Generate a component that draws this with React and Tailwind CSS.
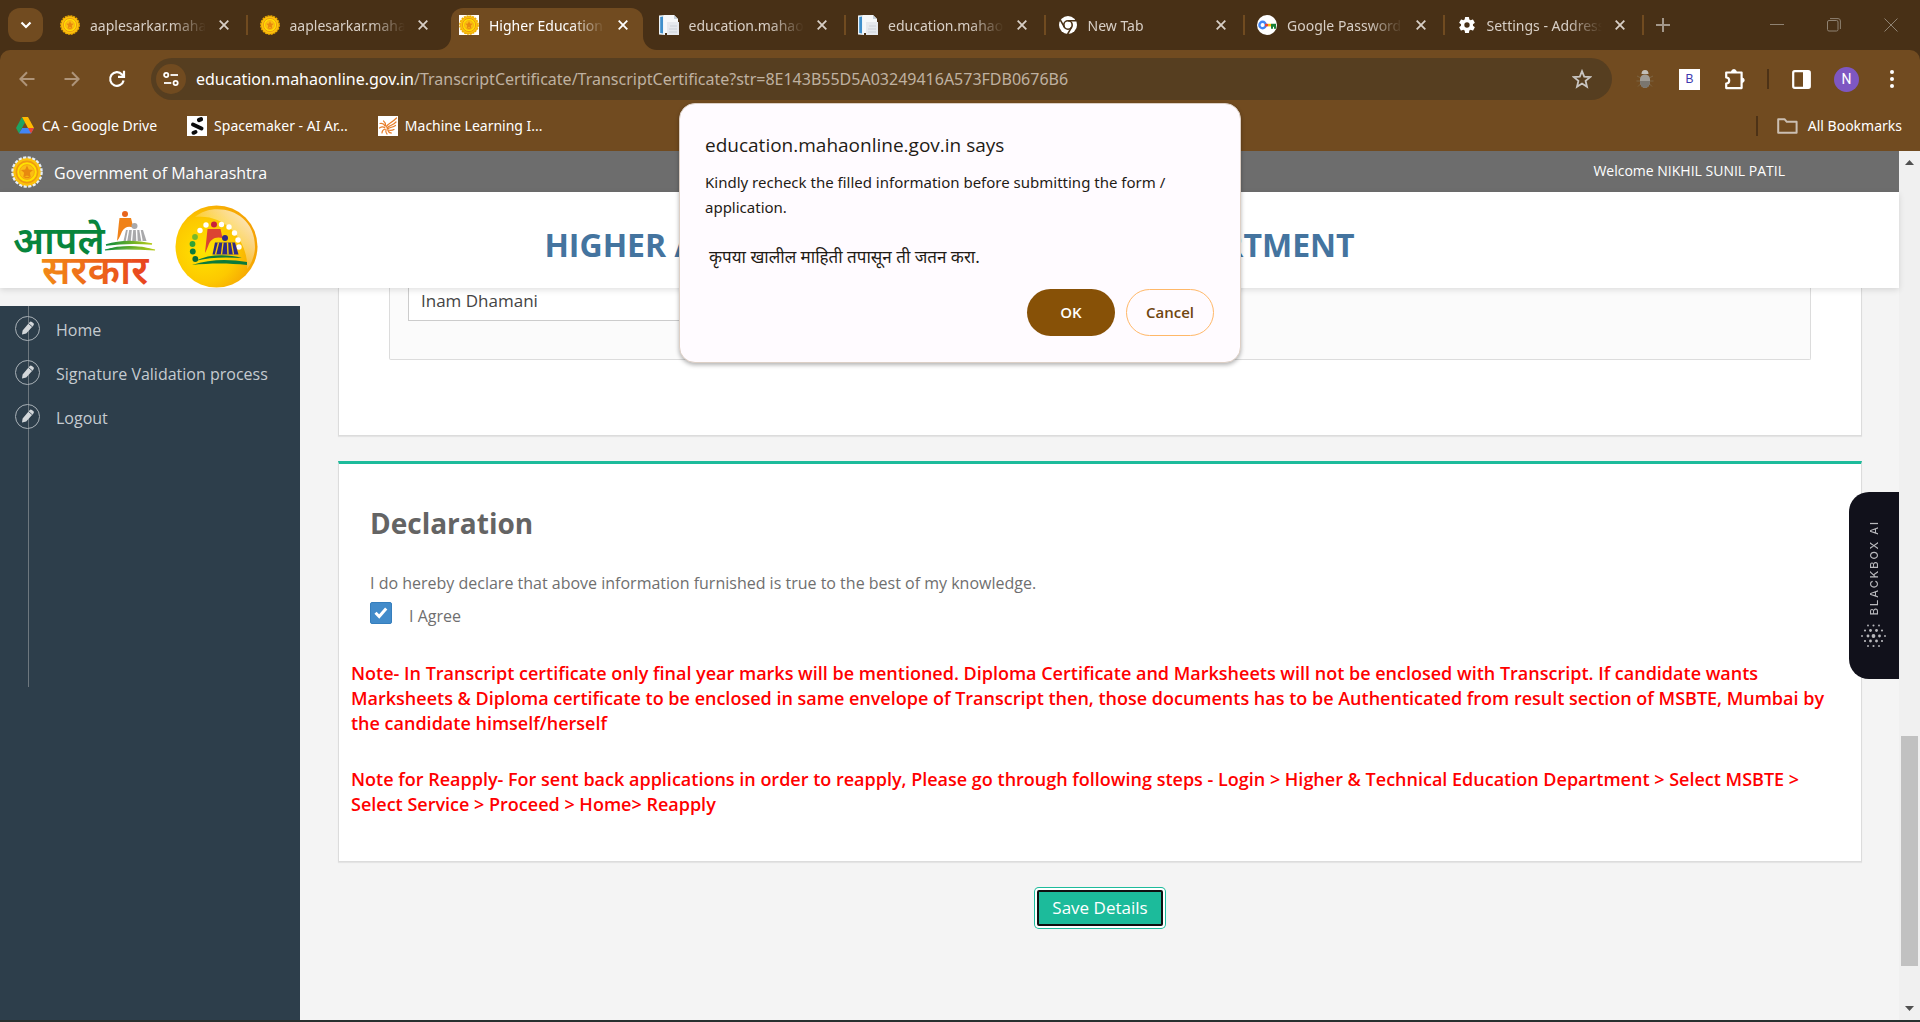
import React from "react";

const UI = "font-['Open_Sans','Noto_Sans',sans-serif]";

function Emblem({ size = 20, plain = false }) {
  return (
    <svg width={size} height={size} viewBox="0 0 32 32" aria-hidden="true" className="shrink-0">
      <circle cx="16" cy="16" r="14.6" fill="#f3b30c" stroke={plain ? "#e6eef5" : "#f0ab00"} strokeWidth="2.4" strokeDasharray="3.2 1.4" />
      <circle cx="16" cy="16" r="13.4" fill="#fbc20d" />
      <circle cx="16" cy="16" r="10.6" fill="#ffe100" stroke="#ee9a12" strokeWidth="1.6" />
      <circle cx="16" cy="16" r="7.4" fill="#fbbd14" stroke="#f0a010" strokeWidth="0.8" />
      <path d="M16 9.5l1.8 3.9 4.2.5-3.1 2.9.9 4.8-3.8-2.2-3.8 2.2.9-4.8-3.1-2.9 4.2-.5z" fill="#e8890f" />
      <path d="M13.4 21.5h5.2" stroke="#e8890f" strokeWidth="1.4" />
    </svg>
  );
}

function FileIcon() {
  return (
    <svg width="20" height="20" viewBox="0 0 20 20" aria-hidden="true">
      <path d="M0 .5L6 0v20l-6-.5z" fill="#eef4f9" />
      <path d="M1.200 2l2.800-.5v17l-2.800-.5z" fill="#3f8fcb" />
      <path d="M5 0h10l4 4v14H5z" fill="#f6f8fa" />
      <path d="M15 0v4h4z" fill="#c6cfd8" />
      <path d="M8 7h12v13H8z" fill="#e6e9ee" />
      <path d="M11 11h7M10 14h8M10 17h8" stroke="#cdd2d9" strokeWidth="1" />
    </svg>
  );
}

function ChromeIcon() {
  return (
    <svg width="20" height="20" viewBox="0 0 20 20" aria-hidden="true">
      <circle cx="10" cy="10" r="9" fill="#fff" />
      <circle cx="10" cy="10" r="4.2" fill="none" stroke="#483016" strokeWidth="1.6" />
      <path d="M10 5.8h8M6.4 12.1L2.4 5.2M13.6 12.1l-4 7" stroke="#483016" strokeWidth="1.6" />
    </svg>
  );
}

function KeyIcon() {
  return (
    <svg width="20" height="20" viewBox="0 0 20 20" aria-hidden="true">
      <circle cx="10" cy="10" r="10" fill="#fff" />
      <circle cx="5.6" cy="10" r="3.2" fill="none" stroke="#4285f4" strokeWidth="2.4" />
      <path d="M8 8.8h3v2.6H8z" fill="#ea4335" />
      <path d="M11 8.8h3v2.6h-3z" fill="#fbbc04" />
      <path d="M14 8.8h5v5h-2v-2h-1v2h-2z" fill="#188038" />
    </svg>
  );
}

function GearIcon() {
  return (
    <svg width="20" height="20" viewBox="0 0 24 24" fill="#fff" aria-hidden="true">
      <path d="M19.14 12.94c.04-.3.06-.61.06-.94s-.02-.64-.07-.94l2.03-1.58a.49.49 0 00.12-.61l-1.92-3.32a.49.49 0 00-.59-.22l-2.39.96a7 7 0 00-1.62-.94l-.36-2.54a.48.48 0 00-.48-.41h-3.84a.47.47 0 00-.47.41l-.36 2.54c-.59.24-1.13.57-1.62.94l-2.39-.96a.48.48 0 00-.59.22L2.74 8.87a.47.47 0 00.12.61l2.03 1.58c-.05.3-.09.63-.09.94s.02.64.07.94l-2.03 1.58a.49.49 0 00-.12.61l1.92 3.32c.12.22.37.29.59.22l2.39-.96c.5.38 1.03.7 1.62.94l.36 2.54c.05.24.24.41.48.41h3.84c.24 0 .44-.17.47-.41l.36-2.54a7 7 0 001.62-.94l2.39.96c.22.08.47 0 .59-.22l1.92-3.32a.47.47 0 00-.12-.61zM12 15.2a3.2 3.2 0 110-6.4 3.2 3.2 0 010 6.4z" />
    </svg>
  );
}

const TABS = [
  { title: "aaplesarkar.mahaonline", icon: <Emblem /> },
  { title: "aaplesarkar.mahaonline", icon: <Emblem />, noSep: true },
  { title: "Higher Education Dept", icon: <span className="block bg-white"><Emblem /></span>, active: true },
  { title: "education.mahaonline", icon: <FileIcon /> },
  { title: "education.mahaonline", icon: <FileIcon /> },
  { title: "New Tab", icon: <ChromeIcon /> },
  { title: "Google Password", icon: <KeyIcon /> },
  { title: "Settings - Addresses", icon: <GearIcon /> },
];

function Cross({ color }) {
  return (
    <svg width="10" height="10" viewBox="0 0 10 10" aria-hidden="true">
      <path d="M.7.7l8.6 8.6M9.3.7L.7 9.3" stroke={color} strokeWidth="1.8" />
    </svg>
  );
}

function Tab({ title, icon, active, noSep }) {
  return (
    <div className="relative flex min-w-0 flex-1 items-center pl-3 pr-[14px]">
      {active && (
        <div className="absolute inset-x-1 bottom-0 top-2 rounded-t-xl bg-[#714b20]">
          <svg width="14" height="14" viewBox="0 0 14 14" className="absolute -left-[14px] bottom-0" aria-hidden="true">
            <path d="M14 0v14H0A14 14 0 0014 0z" fill="#714b20" />
          </svg>
          <svg width="14" height="14" viewBox="0 0 14 14" className="absolute -right-[14px] bottom-0" aria-hidden="true">
            <path d="M0 0v14h14A14 14 0 010 0z" fill="#714b20" />
          </svg>
        </div>
      )}
      <button className="relative flex min-w-0 flex-1 items-center gap-[10px]" type="button">
        <span className="shrink-0">{icon}</span>
        <span
          className={
            "block min-w-0 flex-1 overflow-hidden whitespace-nowrap pt-[2px] text-left text-sm leading-6 [mask-image:linear-gradient(to_right,black_70%,transparent)] " +
            (active ? "text-white" : "text-[#d8cfc6]")
          }
        >
          {title}
        </span>
      </button>
      <button type="button" aria-label="Close tab" className="relative ml-2 flex h-5 w-5 shrink-0 items-center justify-center">
        <Cross color={active ? "#fff" : "#d8cfc6"} />
      </button>
      {!active && !noSep && <span className="absolute right-0 top-[15px] h-5 w-[2px] bg-[#714b20]" />}
    </div>
  );
}

function TabStrip() {
  return (
    <div className="flex h-[50px] bg-[#483016]">
      <button type="button" aria-label="Search tabs" className="ml-2 mr-[5px] mt-2 flex h-[34px] w-[35px] items-center justify-center rounded-xl bg-[#714b20]">
        <svg width="12" height="8" viewBox="0 0 12 8" aria-hidden="true">
          <path d="M1.5 1.5L6 6l4.500-4.500" fill="none" stroke="#fff" strokeWidth="2.2" />
        </svg>
      </button>
      <div className="flex min-w-0 flex-1">
        {TABS.map((t, i) => (
          <Tab key={i} {...t} />
        ))}
      </div>
      <div className="flex w-[276px] items-center justify-between pl-3 pr-[22px]">
        <button type="button" aria-label="New tab">
          <svg width="14" height="14" viewBox="0 0 14 14" aria-hidden="true">
            <path d="M7 0v14M0 7h14" stroke="#a3978a" strokeWidth="2" />
          </svg>
        </button>
        <div className="flex items-center gap-[43px]">
          <button type="button" aria-label="Minimize">
            <svg width="14" height="14" viewBox="0 0 14 14" aria-hidden="true"><path d="M0 6.500h14" stroke="#8f8272" /></svg>
          </button>
          <button type="button" aria-label="Restore">
            <svg width="14" height="14" viewBox="0 0 14 14" fill="none" stroke="#8f8272" aria-hidden="true">
              <rect x=".5" y="2.500" width="10.500" height="10.500" rx="1.500" />
              <path d="M3 .6h8a2.400 2.400 0 012.400 2.400v8" />
            </svg>
          </button>
          <button type="button" aria-label="Close window">
            <svg width="14" height="14" viewBox="0 0 14 14" aria-hidden="true"><path d="M.5.5l13 13M13.500.5l-13 13" stroke="#8f8272" /></svg>
          </button>
        </div>
      </div>
    </div>
  );
}

function IconButton({ label, children }) {
  return (
    <button type="button" aria-label={label} className="flex h-[42px] w-[45px] shrink-0 items-center justify-center">
      {children}
    </button>
  );
}

function Toolbar() {
  return (
    <div className="flex h-[58px] items-center pl-1 pr-[6px]">
      <IconButton label="Back">
        <svg width="16" height="16" viewBox="0 0 16 16" fill="none" stroke="#ae9479" strokeWidth="2" aria-hidden="true"><path d="M15.500 8H1.500M8 1.200L1.400 8 8 14.800" /></svg>
      </IconButton>
      <IconButton label="Forward">
        <svg width="16" height="16" viewBox="0 0 16 16" fill="none" stroke="#ae9479" strokeWidth="2" aria-hidden="true"><path d="M.5 8h14M8 1.200L14.600 8 8 14.800" /></svg>
      </IconButton>
      <IconButton label="Reload">
        <svg width="18" height="18" viewBox="0 0 18 18" fill="none" stroke="#fff" strokeWidth="2.200" aria-hidden="true">
          <path d="M15.600 10.500A6.800 6.800 0 1114 4.400l1.600 1.700" />
          <path d="M16 .8v6h-6" />
        </svg>
      </IconButton>
      <div className="ml-3 mr-[10px] flex h-[42px] min-w-0 flex-1 items-center rounded-full bg-[#563e20] pl-[5px] pr-5">
        <button type="button" aria-label="View site information" className="mr-[10px] flex h-[30px] w-[30px] items-center justify-center rounded-full bg-[#714b20]">
          <svg width="16" height="14" viewBox="0 0 16 14" fill="none" stroke="#fff" strokeWidth="1.800" aria-hidden="true">
            <circle cx="3.200" cy="3" r="2.100" /><path d="M7.500 3H15" />
            <circle cx="12.600" cy="11" r="2.100" /><path d="M1 11h7.300" />
          </svg>
        </button>
        <p className="min-w-0 flex-1 truncate text-base leading-6 text-[#bfb1a0]">
          <span className="text-white">education.mahaonline.gov.in</span>
          /TranscriptCertificate/TranscriptCertificate?str=8E143B55D5A03249416A573FDB0676B6
        </p>
        <button type="button" aria-label="Bookmark this tab">
          <svg width="20" height="20" viewBox="0 0 20 20" fill="none" stroke="#c9c5c1" strokeWidth="1.800" aria-hidden="true">
            <path d="M10 2.200l2.200 5.500 5.900.4-4.500 3.800 1.400 5.800-5-3.200-5 3.200 1.400-5.800L1.900 8.100l5.900-.4z" />
          </svg>
        </button>
      </div>
      <IconButton label="Bug extension">
        <svg width="18" height="20" viewBox="0 0 18 20" aria-hidden="true">
          <path d="M4 8.500L1 7M4 12H.5M4.500 15L2 17.500M14 8.500L17 7M14 12h3.500M13.500 15l2.500 2.500" stroke="#7d6442" strokeWidth="1" fill="none" />
          <path d="M5.500 5a3.500 4 0 017 0z" fill="#c3bfb8" />
          <path d="M4 10a5 4.500 0 0110 0v3a5 6 0 01-10 0z" fill="#a09c95" />
          <path d="M4 12h10v1a5 6 0 01-10 0z" fill="#7a766f" />
        </svg>
      </IconButton>
      <IconButton label="Blackbox extension">
        <span className="flex h-[21px] w-[21px] items-center justify-center bg-white font-['Liberation_Sans',sans-serif] text-xs text-[#3c39b0]">B</span>
      </IconButton>
      <IconButton label="Extensions">
        <svg width="22" height="22" viewBox="0 0 22 22" fill="none" stroke="#fff" strokeWidth="2.200" strokeLinejoin="round" aria-hidden="true">
          <path d="M2.200 4.500h15.400v15.600H2.200v-4.600a2.800 2.800 0 000-6z" />
          <path d="M7.500 4a2.400 2.400 0 014.800 0zM18 10a2.200 2.200 0 010 4.400z" fill="#fff" strokeWidth="1" />
        </svg>
      </IconButton>
      <span className="mx-[10px] h-5 w-[2px] shrink-0 bg-[#4d3216]" />
      <IconButton label="Side panel">
        <svg width="19" height="19" viewBox="0 0 19 19" aria-hidden="true">
          <rect x="1.200" y="1.200" width="16.600" height="16.600" rx="1.500" fill="none" stroke="#fff" strokeWidth="2.200" />
          <path d="M11 1h7v17h-7z" fill="#fff" />
        </svg>
      </IconButton>
      <IconButton label="Profile">
        <span className="flex h-[25px] w-[25px] items-center justify-center rounded-full bg-[#7e57c2] font-['Roboto',sans-serif] text-sm text-white">N</span>
      </IconButton>
      <IconButton label="Menu">
        <svg width="4" height="18" viewBox="0 0 4 18" fill="#fff" aria-hidden="true"><circle cx="2" cy="2" r="2" /><circle cx="2" cy="9" r="2" /><circle cx="2" cy="16" r="2" /></svg>
      </IconButton>
    </div>
  );
}

function Bookmarks() {
  return (
    <div className="flex h-[43px] items-center pb-2 pl-4 pr-[18px] text-sm leading-6 text-white">
      <a href="#drive" className="mr-[30px] flex items-center gap-2">
        <svg width="18" height="17" viewBox="0 0 18 17" aria-hidden="true">
          <path d="M6 0L0 11l3 5.500L9 5.500z" fill="#1ea362" />
          <path d="M6 0h6l6 11h-6z" fill="#ffba00" />
          <path d="M6.200 11H18l-3 5.500H3z" fill="#4285f4" />
          <path d="M18 11h-6l3 5.500z" fill="#ea4335" />
        </svg>
        CA - Google Drive
      </a>
      <a href="#spacemaker" className="mr-[30px] flex items-center gap-[7px]">
        <svg width="20" height="20" viewBox="0 0 20 20" aria-hidden="true">
          <path d="M0 0h20v20H0z" fill="#fff" />
          <g stroke="#0b0b0b" strokeLinecap="round" fill="none">
            <path d="M12 4l2-.8" strokeWidth="4.200" />
            <path d="M6 8.500l8.500 4" strokeWidth="4" />
            <path d="M6.500 16.800l2-.8" strokeWidth="4" />
          </g>
        </svg>
        Spacemaker - AI Ar...
      </a>
      <a href="#ml" className="flex items-center gap-[7px]">
        <svg width="20" height="20" viewBox="0 0 20 20" aria-hidden="true">
          <path d="M0 0h20v20H0z" fill="#fff" />
          <g stroke="#e87f2c" strokeWidth="1.200" fill="none" strokeLinecap="round">
            <path d="M8 11C10 7 14 7 18.500 2M9 12c3-3 6-2.500 9-6M9.500 13c3-2 5-1.500 8-3.500M10 14c2 .5 4 .5 6-.5" />
            <path d="M7 10C6 8 4 7 2 7.500M6.500 11.500C5 10.500 3 11 1.500 12M7 13c-1.500.5-3 2-3 4M8 13.500c-.5 2 0 3.500 1 4.500M7.500 9.500C7.500 7.500 7 6 5.500 5M10 14.500c.5 1.500 2 2.500 3.500 2.500" />
          </g>
        </svg>
        Machine Learning I...
      </a>
      <div className="ml-auto flex items-center">
        <span className="mr-[19px] h-5 w-[2px] bg-[#4d3216]" />
        <button type="button" className="flex items-center gap-[10px]">
          <svg width="21" height="16" viewBox="0 0 21 16" fill="none" stroke="#cbbfb2" strokeWidth="2" strokeLinejoin="round" aria-hidden="true">
            <path d="M1.200 1.200h6.300l2.300 2.600h9.800v11H1.200z" />
          </svg>
          All Bookmarks
        </button>
      </div>
    </div>
  );
}

function AapleSarkarLogo() {
  return (
    <svg width="148" height="82" viewBox="0 0 148 82" role="img" aria-label="आपले सरकार">
      <defs>
        <linearGradient id="og" x1="0" x2="1"><stop offset="0" stopColor="#f28a16" /><stop offset="1" stopColor="#e8431f" /></linearGradient>
        <linearGradient id="gg" x1="0" x2="1"><stop offset="0" stopColor="#0a8a3c" /><stop offset="1" stopColor="#b8cc18" /></linearGradient>
      </defs>
      <text x="2" y="48" fontSize="38" fontWeight="600" fill="#07853c" fontFamily="'Noto Sans', sans-serif">आपले</text>
      <text x="31" y="78" fontSize="40" fontWeight="600" fill="url(#og)" fontFamily="'Noto Sans', sans-serif">सरकार</text>
      <circle cx="114" cy="8" r="3" fill="#e8641b" />
      <path d="M108.500 12H120l2.500 10c-4.500-2.500-9-1-11.500 3.500-1.200 3-2.500 6.500-5 9.500 1-8 1.500-16 2.500-23z" fill="#f08218" />
      <circle cx="123.500" cy="20" r="3" fill="#a9a9ab" />
      <path d="M115 24h17l3.500 11h-23z" fill="#a9a9ab" />
      <path d="M117.500 24l-2 11M121.500 24l-1 11M125.500 24l.5 11M129 24l2 11" stroke="#fff" strokeWidth="1.400" />
      <path d="M95 39c16-5 32-4 46-1-14-1-30-1-46 1z" fill="url(#gg)" stroke="url(#gg)" strokeWidth="1.500" />
      <path d="M94 44c18-5 34-4 50 0-15-1-32-2-50 0z" fill="url(#gg)" stroke="url(#gg)" strokeWidth="1.200" />
    </svg>
  );
}

function SunLogo() {
  return (
    <svg width="83" height="83" viewBox="0 0 83 83" aria-hidden="true">
      <defs>
        <radialGradient id="sun" cx="35%" cy="55%" r="70%">
          <stop offset="0" stopColor="#ffe400" /><stop offset=".55" stopColor="#fdc900" /><stop offset="1" stopColor="#f39a05" />
        </radialGradient>
        <linearGradient id="shine" x1="1" y1="0" x2=".3" y2=".7"><stop offset="0" stopColor="#fff" stopOpacity=".9" /><stop offset="1" stopColor="#fff" stopOpacity="0" /></linearGradient>
      </defs>
      <circle cx="41.500" cy="41.500" r="41" fill="url(#sun)" />
      <path d="M20 12C38-4 80 4 80 42c0 8-4 18-8 22C74 38 52 8 20 12z" fill="url(#shine)" />
      <g fill="#fff">
        <circle cx="31" cy="20" r="2.700" /><circle cx="25" cy="25.500" r="2.700" /><circle cx="46.500" cy="19.500" r="2.700" /><circle cx="54" cy="22" r="2.700" />
        <circle cx="59.500" cy="28" r="2.700" /><circle cx="63" cy="35" r="2.700" /><circle cx="64" cy="42" r="2.700" />
      </g>
      <circle cx="20" cy="32" r="2.900" fill="#77b82a" />
      <circle cx="17.500" cy="39" r="2.900" fill="#2fa336" />
      <circle cx="17.800" cy="46.500" r="2.900" fill="#0b7a3b" />
      <circle cx="20.300" cy="54" r="2.900" fill="#0a6a38" />
      <circle cx="39" cy="19.500" r="3" fill="#c8203c" />
      <path d="M32.500 24h13l2 9c-8-2-12 2-14 7-1 3-2 5-3.500 8 1-8 1.500-16 2.500-24z" fill="#dc4432" />
      <circle cx="50" cy="33" r="3" fill="#2f2a86" />
      <path d="M40 37.500h20l3.500 12h-26z" fill="#2f2a86" />
      <path d="M43.500 37.500l-3 12M48 37.500l-1.500 12M52.500 37.500l.5 12M56.500 37.500l2 12" stroke="#fdc900" strokeWidth="1.400" />
      <path d="M20 56c14-7 32-7 47-3-16-1-33-1-47 3zM17 60c18-6 37-6 55-3v3c-18-2-37-2-55 0z" fill="#0b7a3b" />
    </svg>
  );
}

function SideNav() {
  const items = ["Home", "Signature Validation process", "Logout"];
  return (
    <nav className="relative mt-[18px] w-[300px] shrink-0 bg-[#2d3e4b]">
      <span className="absolute left-7 top-0 h-[381px] w-px bg-[#6d777e]" />
      <ul className="relative">
        {items.map((label) => (
          <li key={label}>
            <a href="#nav" className="flex h-11 items-center gap-4 pl-[15px] text-base leading-6 text-[#c5cbd0]">
              <span className="flex h-[25px] w-[25px] items-center justify-center rounded-full border border-[#a9b1b7]">
                <svg width="12" height="14" viewBox="0 0 12 14" aria-hidden="true">
                  <path d="M0 13.500l.6-4L7.600 1.200a1.600 1.600 0 012.300-.2l1.300 1.100a1.600 1.600 0 01.2 2.300L4.200 12.600z" fill="#d3d7da" />
                  <path d="M6.500 2.600l3.600 3" stroke="#2d3e4b" strokeWidth=".8" />
                </svg>
              </span>
              <span className="pt-1">{label}</span>
            </a>
          </li>
        ))}
      </ul>
    </nav>
  );
}

function Declaration() {
  return (
    <section className="mt-[25px] border border-t-3 border-[#dcdcdc] border-t-[#1cbb9b] bg-white px-3 pb-11 shadow-[0_1px_1px_#e4e4e4]">
      <div className="px-[19px] pt-[39px] text-base text-[#6f6f6f]">
        <h2 className="text-[28px] font-bold leading-10 text-[#646464]">Declaration</h2>
        <p className="mt-7 leading-6">I do hereby declare that above information furnished is true to the best of my knowledge.</p>
        <label className="mt-[6px] flex h-6 items-center gap-[17px]">
          <span className="grid place-items-center">
            <input
              type="checkbox"
              defaultChecked
              className="col-start-1 row-start-1 h-[22px] w-[22px] appearance-none rounded-xs border border-[#357ebd] bg-[#428bca]"
            />
            <svg width="14" height="12" viewBox="0 0 14 12" fill="none" className="pointer-events-none z-10 col-start-1 row-start-1" aria-hidden="true">
              <path d="M1.500 5.800L5.200 9.500 12.200 1.500" stroke="#fff" strokeWidth="3" />
            </svg>
          </span>
          <span className="pt-[6px]">I Agree</span>
        </label>
      </div>
      <div className="mt-9 text-lg font-semibold leading-[25px] text-[#ff0000]">
        <p>
          Note- In Transcript certificate only final year marks will be mentioned. Diploma Certificate and Marksheets will not be enclosed with Transcript. If candidate wants Marksheets &amp; Diploma certificate to be enclosed in same envelope of Transcript then, those documents has to be Authenticated from result section of MSBTE, Mumbai by the candidate himself/herself
        </p>
        <p className="mt-[31px]">
          Note for Reapply- For sent back applications in order to reapply, Please go through following steps - Login &gt; Higher &amp; Technical Education Department &gt; Select MSBTE &gt; Select Service &gt; Proceed &gt; Home&gt; Reapply
        </p>
      </div>
    </section>
  );
}

function BlackboxTab() {
  const rows = [
    [4.5, [7, 12.500, 18]],
    [9.5, [4, 9.500, 15.500, 21]],
    [15, [1, 7, 12.500, 18.500, 24]],
    [20, [4, 9.500, 15.500, 21]],
    [25, [7, 12.500, 18]],
  ];
  return (
    <aside className="absolute right-0 top-[341px] flex h-[187px] w-[50px] flex-col items-center justify-center gap-[6px] rounded-l-[20px] bg-[#11111b]">
      <span className="rotate-180 font-['Inter',sans-serif] text-[11px] font-medium leading-4 tracking-[2px] text-[#b9b9bd] [writing-mode:vertical-rl]">BLACKBOX AI</span>
      <svg width="26" height="30" viewBox="0 0 26 30" fill="#b9b9bd" aria-hidden="true">
        {rows.map(([y, xs]) => xs.map((x) => <circle key={x + "-" + y} cx={x} cy={y} r={Math.max(0.9, 1.9 - Math.hypot(x - 12.500, y - 15) / 12)} />))}
      </svg>
    </aside>
  );
}

function AlertDialog() {
  return (
    <div
      role="alertdialog"
      aria-labelledby="dlg-title"
      className="absolute left-1/2 top-[103px] z-20 w-[562px] -translate-x-1/2 rounded-2xl border border-[#dccfc5] bg-[#fffbff] px-[25px] pb-[26px] pt-[27px] text-[#1f1b16] shadow-[0_2px_4px_rgba(0,0,0,0.3)]"
    >
      <h1 id="dlg-title" className="text-[19px] font-medium leading-7">education.mahaonline.gov.in says</h1>
      <div className="mt-[11px] font-['Noto_Sans',sans-serif] text-[15px] leading-[25px]">
        <p>Kindly recheck the filled information before submitting the form / application.</p>
        <p className="mt-6 pl-1 text-[17px] leading-[25px]">कृपया खालील माहिती तपासून ती जतन करा.</p>
      </div>
      <div className="mt-[20px] flex justify-end gap-[11px] pr-px text-[15px] font-semibold">
        <button type="button" className="h-[47px] w-[88px] rounded-full bg-[#875107] text-white">OK</button>
        <button type="button" className="h-[47px] w-[88px] rounded-full border border-[#ffb868] text-[#6f4610]">Cancel</button>
      </div>
    </div>
  );
}

function Scrollbar() {
  return (
    <div className="flex w-[21px] shrink-0 flex-col items-center justify-between bg-[#f0f0f0]" aria-hidden="true">
      <svg width="21" height="21" viewBox="0 0 21 21"><path d="M6 14l4.500-5 4.500 5z" fill="#505050" /></svg>
      <span className="mb-[33px] mt-auto h-[230px] w-[17px] bg-[#c1c1c1]" />
      <svg width="21" height="21" viewBox="0 0 21 21"><path d="M6 7l4.500 5 4.500-5z" fill="#505050" /></svg>
    </div>
  );
}

export default function App() {
  return (
    <div className={"relative flex h-screen flex-col overflow-hidden bg-[#f4f4f4] " + UI}>
      <div className="bg-[#483016] font-['Noto_Sans',sans-serif]">
        <TabStrip />
        <div className="rounded-t-[10px] bg-[#714b20]">
          <Toolbar />
          <Bookmarks />
        </div>
      </div>
      <div className="flex min-h-0 flex-1 border-b-2 border-[#27302f]">
        <div className="relative flex min-w-0 flex-1 flex-col">
          <div className="flex h-[41px] shrink-0 items-center bg-[#6d6d6d] pl-[11px] pr-[114px] text-white">
            <Emblem size={32} plain />
            <span className="ml-[11px] pt-[2px] text-base">Government of Maharashtra</span>
            <span className="ml-auto pb-[2px] text-sm">Welcome NIKHIL SUNIL PATIL</span>
          </div>
          <header className="relative z-10 grid h-[96px] shrink-0 grid-cols-[1fr_auto_1fr] items-center bg-white px-[11px] shadow-[0_2px_6px_rgba(0,0,0,0.12)]">
            <div className="flex items-end gap-4 self-end">
              <AapleSarkarLogo />
              <SunLogo />
            </div>
            <p className="pt-[10px] text-[32px] font-bold leading-10 text-[#44749f]">HIGHER AND TECHNICAL EDUCATION DEPARTMENT</p>
            <span />
          </header>
          <div className="flex min-h-0 flex-1">
            <SideNav />
            <main className="min-w-0 flex-1 pl-[38px] pr-[37px]">
              <section className="h-[148px] border border-t-0 border-[#dcdcdc] bg-white px-[50px] shadow-[0_1px_1px_#e4e4e4]">
                <div className="h-[72px] rounded-b-xs border border-t-0 border-[#dcdcdc] bg-[#fbfbfb] px-[18px]">
                  <input
                    aria-label="Name"
                    defaultValue="Inam Dhamani"
                    className="block h-[33px] w-2/5 border border-t-0 border-[#cccccc] bg-white px-3 pb-2 text-[17px] text-[#444444]"
                  />
                </div>
              </section>
              <Declaration />
              <div className="mt-7 flex justify-center">
                <button
                  type="button"
                  className="h-[36px] w-[126px] rounded-xs border-2 border-[#101010] bg-[#1cbb9b] text-[17px] leading-6 text-white shadow-[0_0_0_2px_#ffffff,0_0_0_3px_#1cbb9b]"
                >
                  Save Details
                </button>
              </div>
            </main>
          </div>
          <BlackboxTab />
        </div>
        <Scrollbar />
      </div>
      <AlertDialog />
    </div>
  );
}
